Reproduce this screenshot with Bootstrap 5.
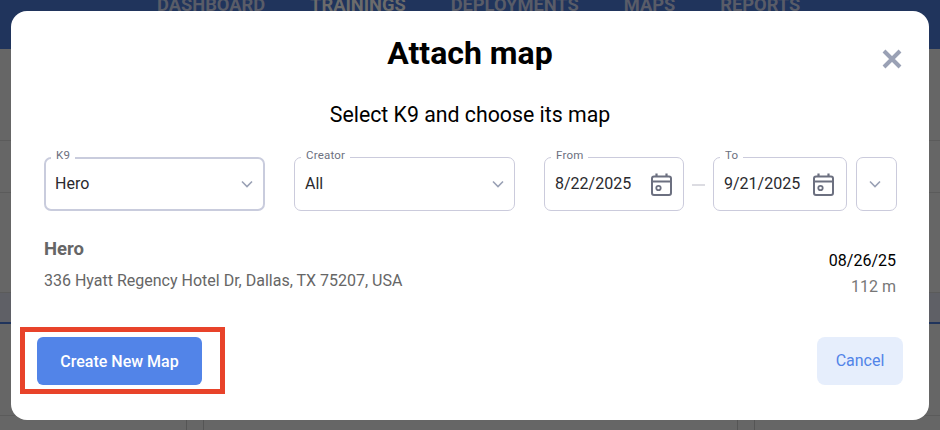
<!DOCTYPE html>
<html lang="en">
<head>
<meta charset="utf-8">
<title>Attach map</title>
<link href="https://cdn.jsdelivr.net/npm/bootstrap@5.3.0/dist/css/bootstrap.min.css" rel="stylesheet">
<style>
html,body{height:430px;overflow:hidden}
body{font-family:Roboto,"Liberation Sans",sans-serif;background:#666;color:#222}
.shell{position:relative;width:940px;height:430px;overflow:hidden}
.topbar{height:49px;background:#20345c;gap:45px;padding-left:157px;overflow:hidden}
.toplink{font-size:18.3px;font-weight:700;line-height:20px;margin-top:-5px;color:#595c68;text-transform:uppercase;white-space:nowrap}
.toplink-on{color:#6b6b6b}
.bgrow{border-bottom:1px solid #5b5b5b}
.bgrow1{height:92px}
.bgrow2{height:52px}
.bgrow3{height:100px}
.bgrow4{height:31px;background:#5f6066;border-bottom:2px solid #20345c;border-top:0}
.bgrow5{height:92px;position:relative;border-bottom:1px solid #5b5b5b}
.bgcol{position:absolute;top:0;bottom:-20px;width:18px;border-left:1px solid #555;border-right:1px solid #555}
.bgcol-a{left:186px}
.bgcol-b{left:737px}
.dlg{position:absolute;left:11px;top:11px;width:918px;height:409px;background:#fff;border-radius:16px;padding:0 26px 0 26px}
.dlg-title{font-size:32px;font-weight:700;color:#000;text-align:center;line-height:36px;margin:0;padding-top:24px}
.dlg-sub{font-size:21.3px;color:#000;text-align:center;line-height:24px;margin:0;padding-top:32px}
.closer{position:absolute;right:27px;top:38px;width:20px;height:20px;padding:0;border:0;background:none;line-height:0}
.filters{margin-top:30px;padding-left:7px;width:860px}
.fld{position:relative;height:54px;border:1px solid #cbcbdc;border-radius:7px;background:#fff;font-size:16px;color:#2a2a2e;padding:0 11px 0 10px}
.fld-focus{border:2px solid #c9ccdd;padding:0 9px}
.fld-sel{width:221px;margin-right:29px;padding-right:10px;padding-bottom:1px}
.fld-from{width:140px}
.fld-to{width:134px;padding-right:12px}
.fld-more{width:41px;margin-left:9px;padding:0 3px 0 0}
.fld-label{position:absolute;top:-10px;left:6px;padding:0 5px;background:#fff;font-size:11.5px;line-height:14px;color:#6c7080;letter-spacing:.2px}
.fld-focus .fld-label{left:5px;top:-11px}
.dash{width:29px;padding:0 8px}
.dash span{display:block;width:13px;height:2px;background:#dcdce2;margin-top:2px}
.resultline{padding:27px 7px 0 7px;height:126px;width:866px}
.rname{font-size:18.5px;font-weight:700;color:#666;line-height:22px;margin:0}
.raddr{font-size:16px;color:#666;line-height:20px;margin:11px 0 0}
.rdate{font-size:16px;color:#000;line-height:20px;margin:13px 0 0;text-align:right}
.rdist{font-size:16px;color:#777;line-height:20px;margin:6px 0 0;text-align:right}
.actions{width:866px}
.callout{border:5px solid #e8432a;padding:5px 18px 4px 12px;margin-left:-17px;margin-top:-10px}
.btn-make{width:165px;height:48px;background:#5284e8;border:0;border-radius:6px;color:#fff;font-size:16px;font-weight:500;padding:1px 0 0}
.btn-make:hover{background:#5284e8;color:#fff}
.btn-quit{width:86px;height:48px;background:#e6eefc;border:0;border-radius:8px;color:#5284e8;font-size:16px;padding:0}
.btn-quit:hover{background:#e6eefc;color:#5284e8}
</style>
</head>
<body>
<div class="shell">
  <nav class="topbar d-flex align-items-start">
    <span class="toplink">Dashboard</span>
    <span class="toplink toplink-on">Trainings</span>
    <span class="toplink">Deployments</span>
    <span class="toplink">Maps</span>
    <span class="toplink">Reports</span>
  </nav>
  <div class="bgrow bgrow1"></div>
  <div class="bgrow bgrow2"></div>
  <div class="bgrow bgrow3"></div>
  <div class="bgrow4"></div>
  <div class="bgrow5"><span class="bgcol bgcol-a"></span><span class="bgcol bgcol-b"></span></div>

  <div class="dlg" role="dialog" aria-label="Attach map">
    <h2 class="dlg-title">Attach map</h2>
    <button class="closer" type="button" aria-label="Close">
      <svg width="20" height="20" viewBox="0 0 20 20"><path d="M2 2 18 18M18 2 2 18" stroke="#9aa1b5" stroke-width="4" fill="none"/></svg>
    </button>
    <p class="dlg-sub">Select K9 and choose its map</p>

    <div class="filters d-flex">
      <div class="fld fld-focus fld-sel d-flex align-items-center justify-content-between">
        <span class="fld-label">K9</span><span>Hero</span>
        <svg width="12" height="8" viewBox="0 0 12 8"><path d="M1 1.5 6 6.5 11 1.5" stroke="#9aa1b5" stroke-width="1.6" fill="none"/></svg>
      </div>
      <div class="fld fld-sel d-flex align-items-center justify-content-between">
        <span class="fld-label">Creator</span><span>All</span>
        <svg width="12" height="8" viewBox="0 0 12 8"><path d="M1 1.5 6 6.5 11 1.5" stroke="#9aa1b5" stroke-width="1.6" fill="none"/></svg>
      </div>
      <div class="fld fld-from d-flex align-items-center justify-content-between">
        <span class="fld-label">From</span><span>8/22/2025</span>
        <svg width="21" height="23" viewBox="0 0 21 23"><rect x="1" y="3.5" width="19" height="18.500" rx="2" stroke="#6c7080" stroke-width="2" fill="none"/><path d="M1 8.500H20M5.500 .5V4M15.500 .5V4" stroke="#6c7080" stroke-width="2.200" fill="none"/><circle cx="7.500" cy="15" r="2.200" stroke="#6c7080" stroke-width="1.800" fill="none"/></svg>
      </div>
      <div class="dash d-flex align-self-center"><span></span></div>
      <div class="fld fld-to d-flex align-items-center justify-content-between">
        <span class="fld-label">To</span><span>9/21/2025</span>
        <svg width="21" height="23" viewBox="0 0 21 23"><rect x="1" y="3.5" width="19" height="18.500" rx="2" stroke="#6c7080" stroke-width="2" fill="none"/><path d="M1 8.500H20M5.500 .5V4M15.500 .5V4" stroke="#6c7080" stroke-width="2.200" fill="none"/><circle cx="7.500" cy="15" r="2.200" stroke="#6c7080" stroke-width="1.800" fill="none"/></svg>
      </div>
      <div class="fld fld-more d-flex align-items-center justify-content-center">
        <svg width="12" height="8" viewBox="0 0 12 8"><path d="M1 1.5 6 6.5 11 1.5" stroke="#9aa1b5" stroke-width="1.6" fill="none"/></svg>
      </div>
    </div>

    <div class="resultline d-flex justify-content-between">
      <div>
        <p class="rname">Hero</p>
        <p class="raddr">336 Hyatt Regency Hotel Dr, Dallas, TX 75207, USA</p>
      </div>
      <div>
        <p class="rdate">08/26/25</p>
        <p class="rdist">112 m</p>
      </div>
    </div>

    <div class="actions d-flex justify-content-between align-items-start">
      <div class="callout"><button class="btn btn-make" type="button">Create New Map</button></div>
      <button class="btn btn-quit" type="button">Cancel</button>
    </div>
  </div>
</div>
</body>
</html>
